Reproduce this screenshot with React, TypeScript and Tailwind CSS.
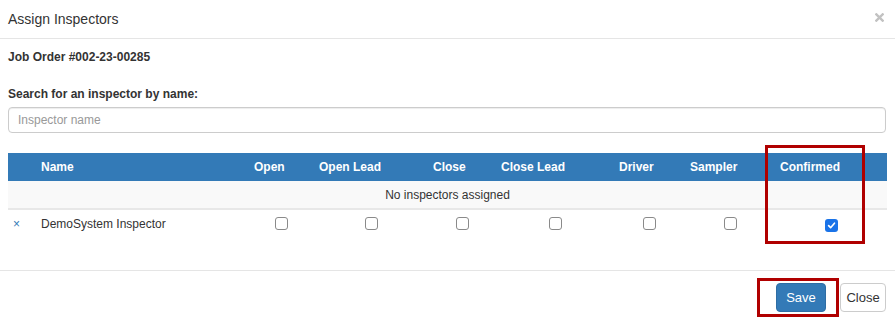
import React from "react"

const columns = ["Open", "Open Lead", "Close", "Close Lead", "Driver", "Sampler", "Confirmed"]

function Box({ checked }: { checked?: boolean }) {
  if (checked) {
    return (
      <span className="inline-flex h-[13px] w-[13px] items-center justify-center rounded-[3px] bg-[#1a73e8]">
        <svg width="9" height="9" viewBox="0 0 10 10">
          <path d="M1.8 5.2 L4 7.4 L8.3 2.4" fill="none" stroke="white" strokeWidth="1.8" strokeLinecap="round" strokeLinejoin="round" />
        </svg>
      </span>
    )
  }
  return <span className="inline-block h-[13px] w-[13px] rounded-[3px] border border-[#8a8a8a] bg-white" />
}

export default function App() {
  const confirmed = [false, false, false, false, false, false, true]

  return (
    <div className="relative h-[321px] w-[895px] overflow-hidden bg-white text-[#333] [font-family:'Liberation_Sans',Arial,sans-serif]">
      {/* header */}
      <div className="flex h-[39px] items-center justify-between border-b border-[#e5e5e5] pl-2 pr-[11px]">
        <span className="text-[14px]">Assign Inspectors</span>
        <svg width="9" height="9" viewBox="0 0 10 10" className="-mt-[3px]">
          <path d="M1.5 1.5 L8.5 8.5 M8.5 1.5 L1.5 8.5" stroke="#c2c2c2" strokeWidth="2.6" strokeLinecap="square" />
        </svg>
      </div>

      {/* body */}
      <div className="px-2">
        <div className="mt-[10px] text-[12px] leading-[17px] font-bold">Job Order #002-23-00285</div>
        <div className="mt-[20px] text-[12px] leading-[17px] font-bold">Search for an inspector by name:</div>
        <input
          placeholder="Inspector name"
          className="mt-[4px] block h-[26px] w-[878px] rounded-[4px] border border-[#ccc] px-[9px] text-[12px] text-[#555] shadow-[inset_0_1px_1px_rgba(0,0,0,0.075)] outline-none placeholder:text-[#999]"
        />

        <table className="mt-[20px] w-[879px] table-fixed border-collapse text-[12px]">
          <colgroup>
            <col className="w-[28px]" />
            <col className="w-[213px]" />
            <col className="w-[65px]" />
            <col className="w-[114px]" />
            <col className="w-[68px]" />
            <col className="w-[118px]" />
            <col className="w-[71px]" />
            <col className="w-[90px]" />
            <col className="w-[112px]" />
          </colgroup>
          <thead>
            <tr className="h-[28px] bg-[#337ab7] text-left text-white">
              <th className="px-[5px]"></th>
              <th className="px-[5px] font-bold">Name</th>
              {columns.map((c) => (
                <th key={c} className="px-[5px] font-bold whitespace-nowrap">
                  {c}
                </th>
              ))}
            </tr>
          </thead>
          <tbody>
            <tr className="h-[28px] border-b-2 border-[#e8e8e8] bg-[#f9f9f9]">
              <td colSpan={9} className="text-center">
                No inspectors assigned
              </td>
            </tr>
            <tr className="h-[29px]">
              <td className="px-[5px] text-[12px] text-[#337ab7]">×</td>
              <td className="px-[5px] pb-[1px]">DemoSystem Inspector</td>
              {confirmed.map((v, i) => (
                <td key={i} className="pt-[4px] text-center align-middle">
                  <Box checked={v} />
                </td>
              ))}
            </tr>
          </tbody>
        </table>
      </div>

      {/* footer */}
      <div className="mt-[32px] flex justify-end gap-[14px] border-t border-[#e5e5e5] pt-[12px] pr-[9px]">
        <button className="h-[29px] w-[50px] rounded-[4px] border border-[#2e6da4] bg-[#337ab7] text-[13px] text-white">
          Save
        </button>
        <button className="h-[29px] w-[46px] rounded-[4px] border border-[#ccc] bg-white text-[13px] text-[#333]">
          Close
        </button>
      </div>

      {/* annotation boxes */}
      <div className="pointer-events-none absolute left-[765px] top-[145px] h-[99px] w-[100px] border-[3px] border-[#b00000]" />
      <div className="pointer-events-none absolute left-[757px] top-[278px] h-[39px] w-[82px] border-[3px] border-[#b00000]" />
    </div>
  )
}
